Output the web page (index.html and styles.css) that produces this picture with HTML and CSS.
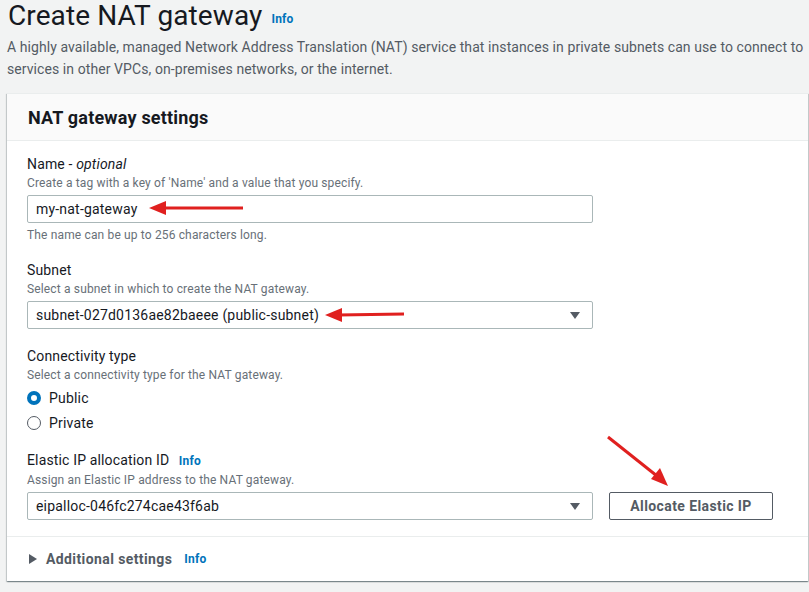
FILE: index.html
```html
<!DOCTYPE html>
<html>
<head>
<meta charset="utf-8">
<link rel="stylesheet" href="styles.css">
</head>
<body>
<div class="page">
  <header class="page-head">
    <h1 class="title">Create NAT gateway <a class="info info-title">Info</a></h1>
    <p class="lead">A highly available, managed Network Address Translation (NAT) service that instances in private subnets can use to connect to services in other VPCs, on-premises networks, or the internet.</p>
  </header>

  <section class="card">
    <div class="card-head">NAT gateway settings</div>
    <div class="card-body">
      <div class="field">
        <div class="label">Name - <i>optional</i></div>
        <div class="desc">Create a tag with a key of 'Name' and a value that you specify.</div>
        <div class="control input">my-nat-gateway</div>
        <div class="constraint">The name can be up to 256 characters long.</div>
      </div>

      <div class="field">
        <div class="label">Subnet</div>
        <div class="desc">Select a subnet in which to create the NAT gateway.</div>
        <div class="control select">subnet-027d0136ae82baeee (public-subnet)<span class="caret"></span></div>
      </div>

      <div class="field">
        <div class="label">Connectivity type</div>
        <div class="desc">Select a connectivity type for the NAT gateway.</div>
        <div class="radios">
          <div class="radio"><span class="dot checked"></span>Public</div>
          <div class="radio"><span class="dot"></span>Private</div>
        </div>
      </div>

      <div class="field">
        <div class="label">Elastic IP allocation ID <a class="info info-label">Info</a></div>
        <div class="desc">Assign an Elastic IP address to the NAT gateway.</div>
        <div class="row">
          <div class="control select">eipalloc-046fc274cae43f6ab<span class="caret"></span></div>
          <button class="btn">Allocate Elastic IP</button>
        </div>
      </div>
    </div>
    <div class="card-foot">
      <span class="tri"></span><span class="foot-title">Additional settings</span><a class="info info-foot">Info</a>
    </div>
  </section>

  <svg class="arrows" width="809" height="592" viewBox="0 0 809 592">
    <g stroke="#e0201f" stroke-width="3" fill="#e0201f">
      <line x1="243" y1="208" x2="162" y2="208"/>
      <polygon points="149,208 166,201 166,215" stroke="none"/>
      <line x1="404" y1="314" x2="338" y2="315"/>
      <polygon points="325,315 342,308 342,322" stroke="none"/>
      <line x1="608" y1="437" x2="657" y2="476"/>
      <polygon points="668,486 651,479 660,468" stroke="none"/>
    </g>
  </svg>
</div>
</body>
</html>
```

FILE: styles.css
```css
* { box-sizing: border-box; }
html, body { margin: 0; padding: 0; }
body {
  background: #f2f3f3;
  font-family: Roboto, "Liberation Sans", sans-serif;
  color: #16191f;
  width: 809px;
  height: 592px;
  overflow: hidden;
}
.page { position: relative; padding: 0 0 0 7px; }
.title {
  margin: 0;
  font-size: 28px;
  font-weight: 400;
  line-height: 32px;
  padding-left: 1px;
  letter-spacing: 0.1px;
}
.info {
  color: #0073bb;
  font-weight: 700;
  font-size: 12px;
  text-decoration: none;
  letter-spacing: 0.2px;
}
.info-title { margin-left: 2px; vertical-align: 2px; }
.lead {
  margin: 1px 0 0;
  font-size: 14px;
  line-height: 22px;
  color: #545b64;
  width: 802px;
  letter-spacing: 0.08px;
}
.card {
  margin-top: 13px;
  width: 801px;
  background: #fff;
  border-top: 1px solid #eaeded;
  box-shadow: 0 1px 1px 0 rgba(0,28,36,.3), 1px 1px 1px 0 rgba(0,28,36,.15), -1px 1px 1px 0 rgba(0,28,36,.15);
}
.card-head {
  background: #fafafa;
  border-bottom: 1px solid #eaeded;
  height: 47px;
  padding: 0 21px;
  display: flex;
  align-items: center;
  font-size: 18px;
  font-weight: 700;
  letter-spacing: 0.2px;
}
.card-body { padding: 12px 20px 16px; border-bottom: 1px solid #eaeded; }
.field + .field { margin-top: 16px; }
.field:last-child { margin-top: 14px; }
.label { font-size: 14px; line-height: 22px; letter-spacing: 0.15px; }
.info-label { margin-left: 6px; }
.desc { font-size: 12px; line-height: 16px; color: #687078; letter-spacing: 0.15px; }
.control {
  margin-top: 4px;
  width: 566px;
  height: 28px;
  border: 1px solid #aab7b8;
  border-radius: 2px;
  font-size: 14px;
  padding: 0 8px;
  display: flex;
  align-items: center;
  position: relative;
  letter-spacing: 0.2px;
}
.constraint { margin-top: 4px; font-size: 12px; line-height: 16px; color: #687078; letter-spacing: 0.15px; }
.caret {
  position: absolute;
  right: 12px;
  top: 10px;
  width: 0; height: 0;
  border-left: 5px solid transparent;
  border-right: 5px solid transparent;
  border-top: 7px solid #545b64;
}
.radios { margin-top: 2px; }
.radio { height: 25px; display: flex; align-items: center; font-size: 14px; letter-spacing: 0.2px; }
.dot {
  width: 14px; height: 14px;
  border-radius: 50%;
  border: 1.5px solid #545b64;
  margin-right: 8px;
  flex: none;
}
.dot.checked { border: 4px solid #0073bb; }
.row { display: flex; align-items: flex-end; gap: 16px; }
.btn {
  margin: 0;
  width: 164px;
  height: 28px;
  background: #fff;
  border: 1px solid #545b64;
  border-radius: 2px;
  font-family: inherit;
  font-weight: 700;
  font-size: 14px;
  color: #545b64;
  letter-spacing: 0.4px;
}
.card-foot {
  height: 44px;
  display: flex;
  align-items: center;
  padding-left: 22px;
}
.tri {
  width: 0; height: 0;
  border-top: 5px solid transparent;
  border-bottom: 5px solid transparent;
  border-left: 8px solid #545b64;
  margin-right: 9px;
}
.foot-title { font-size: 14px; font-weight: 700; color: #545b64; letter-spacing: 0.4px; }
.info-foot { margin-left: 12px; }
.arrows { position: absolute; left: 0; top: 0; pointer-events: none; }
```
